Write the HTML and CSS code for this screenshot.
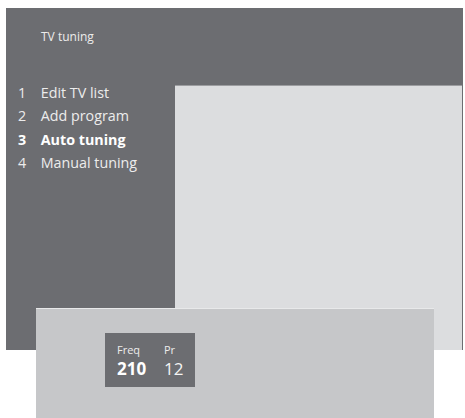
FILE: index.html
```html
<!DOCTYPE html>
<html lang="en">
<head>
  <meta charset="UTF-8">
  <meta name="viewport" content="width=device-width, initial-scale=1.0">
  <title>TV tuning</title>
  <link rel="stylesheet" href="styles.css">
</head>
<body>
  <div class="screen">
    <div class="header">TV tuning</div>
    <div class="content">
      <ul class="menu">
        <li><span class="num">1</span>Edit TV list</li>
        <li><span class="num">2</span>Add program</li>
        <li class="active"><span class="num">3</span>Auto tuning</li>
        <li><span class="num">4</span>Manual tuning</li>
      </ul>
      <div class="preview"></div>
    </div>
  </div>

  <div class="overlay">
    <div class="readout">
      <div class="field freq">
        <div class="label">Freq</div>
        <div class="value bold">210</div>
      </div>
      <div class="field">
        <div class="label">Pr</div>
        <div class="value">12</div>
      </div>
    </div>
  </div>
</body>
</html>
```

FILE: styles.css
```css
body {
  margin: 0;
  background-color: #fff;
  font-family: "Open Sans", "DejaVu Sans", sans-serif;
  color: #ececec;
  width: 465px;
  height: 418px;
  position: relative;
  overflow: hidden;
}

.screen {
  margin: 8px 0 0 6px;
  width: 457px;
  height: 342px;
  background-color: #6c6d71;
  display: flex;
  flex-direction: column;
}

.header {
  height: 73px;
  box-sizing: border-box;
  padding: 21px 0 0 35px;
  font-size: 12px;
  line-height: 16px;
}

.content {
  flex: 1;
  display: flex;
}

.menu {
  list-style: none;
  margin: 0;
  padding: 0 0 0 12px;
  width: 157px;
  font-size: 14.3px;
  line-height: 23.4px;
}

.menu li {
  display: flex;
}

.menu .num {
  width: 22.7px;
}

.menu .active {
  font-weight: bold;
  color: #fff;
}

.preview {
  flex: 1;
  margin: 4px 1px 0 0;
  background-color: #dcdddf;
  border-top: 1px solid #9c9da0;
}

.overlay {
  position: absolute;
  left: 36px;
  top: 308px;
  width: 398px;
  height: 110px;
  background-color: #c6c7c9;
  border-top: 1px solid #e8e9ea;
  box-sizing: border-box;
  padding: 24px 0 0 69px;
}

.readout {
  width: 90px;
  height: 54px;
  box-sizing: border-box;
  background-color: #6c6d71;
  padding: 9px 0 0 12px;
  display: flex;
}

.field.freq {
  width: 47px;
}

.label {
  font-size: 11px;
}

.value {
  font-size: 17px;
  color: #f4f4f4;
}

.value.bold {
  font-weight: bold;
  color: #fff;
}
```
